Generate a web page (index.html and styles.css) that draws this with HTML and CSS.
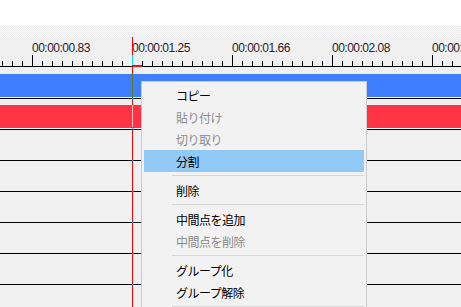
FILE: index.html
```html
<!DOCTYPE html>
<html lang="ja">
<head>
<meta charset="utf-8">
<title>Timeline</title>
<link rel="stylesheet" href="styles.css">
</head>
<body>
<div class="app">
  <div class="topbar"></div>
  <div class="checker"></div>
  <div class="ruler">
    <div class="labels">
      <span class="label">00:00:00.83</span>
      <span class="label">00:00:01.25</span>
      <span class="label">00:00:01.66</span>
      <span class="label">00:00:02.08</span>
      <span class="label">00:00:02.50</span>
    </div>
    <svg class="ticks" width="461" height="31" viewBox="0 0 461 31">
      <g stroke="#000" stroke-width="1" shape-rendering="crispEdges">
        <line x1="0" y1="29.5" x2="461" y2="29.5"/>
        <path id="tk" d=""/>
      </g>
    </svg>
  </div>
  <div class="tracks">
    <div class="row"><div class="clip clip-blue"></div></div>
    <div class="row"><div class="clip clip-red"></div></div>
    <div class="row"></div>
    <div class="row"></div>
    <div class="row"></div>
    <div class="row"></div>
    <div class="row"></div>
    <div class="row"></div>
  </div>

  <div class="playhead"></div>
  <div class="playhead-mark"></div>

  <div class="menu">
    <div class="item">コピー</div>
    <div class="item disabled">貼り付け</div>
    <div class="item disabled">切り取り</div>
    <div class="item active">分割</div>
    <div class="sep"></div>
    <div class="item">削除</div>
    <div class="sep"></div>
    <div class="item">中間点を追加</div>
    <div class="item disabled">中間点を削除</div>
    <div class="sep"></div>
    <div class="item">グループ化</div>
    <div class="item">グループ解除</div>
    <div class="sep"></div>
  </div>
</div>
<script>
(function(){
  var d = "";
  for (var x = 2; x < 461; x += 10) {
    var top = ((x - 32) % 100 === 0) ? 18 : 24;
    d += "M" + (x + 0.5) + " " + top + "V29 ";
  }
  document.getElementById("tk").setAttribute("d", d);
})();
</script>
</body>
</html>
```

FILE: styles.css
```css
html, body {
  margin: 0;
  padding: 0;
}
body {
  width: 461px;
  height: 307px;
  overflow: hidden;
  background: #f0f0f0;
}
.app {
  position: relative;
  width: 461px;
  height: 307px;
  overflow: hidden;
  background: #f0f0f0;
}
.topbar {
  height: 25px;
  background: #ffffff;
}
.checker {
  height: 12px;
  background: repeating-conic-gradient(#ececec 0 25%, #f9f9f9 0 50%) 0 0 / 2px 2px;
}
.ruler {
  position: relative;
  height: 31px;
  background: #f0f0f0;
}
.labels {
  display: flex;
  padding-left: 32px;
  padding-top: 4px;
  font-family: "Liberation Sans", Arial, sans-serif;
  font-size: 12px;
  letter-spacing: -0.5px;
  line-height: 14px;
  color: #1f2430;
  white-space: nowrap;
}
.label {
  flex: 0 0 100px;
}
.ticks {
  position: absolute;
  left: 0;
  top: 0;
}
.tracks {
  display: flex;
  flex-direction: column;
}
.row {
  flex: 0 0 auto;
  height: 24px;
  padding-top: 6px;
  box-sizing: content-box;
  border-bottom: 1px solid #000;
}
.clip {
  height: 23px;
  border-bottom: 1px solid #fff;
}
.clip-blue { background: #3f7fff; }
.clip-red { background: #ff3344; }

.playhead {
  position: absolute;
  left: 132px;
  top: 37px;
  width: 1px;
  height: 270px;
  background: linear-gradient(to bottom,
    #ff0000 0 18px,
    #00e0ff 18px 28px,
    #ff0000 28px 37px,
    #5f7a1a 37px 60px,
    #ff0000 60px 61px,
    #00e0ff 61px 62px,
    #ff0000 62px 68px,
    #ffc0c8 68px 90px,
    #ff0000 90px 91px,
    #00e0ff 91px 92px,
    #ff0000 92px 123px,
    #00e0ff 123px 124px,
    #ff0000 124px 154px,
    #00e0ff 154px 155px,
    #ff0000 155px 185px,
    #00e0ff 185px 186px,
    #ff0000 186px 216px,
    #00e0ff 216px 217px,
    #ff0000 217px 247px,
    #00e0ff 247px 248px,
    #ff0000 248px 270px);
}
.playhead-mark {
  position: absolute;
  left: 133px;
  top: 65px;
  width: 9px;
  height: 2px;
  background: #ee1111;
}

.menu {
  position: absolute;
  left: 141px;
  top: 81px;
  width: 224px;
  padding: 2px 0 4px;
  background: #f2f2f2;
  border: 1px solid #cccccc;
  font-family: "Noto Sans CJK JP", "Noto Sans", sans-serif;
  font-size: 12px;
  letter-spacing: -0.5px;
  color: #000;
}
.item {
  height: 22px;
  margin: 0 2px;
  padding-left: 32px;
  display: flex;
  align-items: center;
  white-space: nowrap;
}
.item.disabled {
  color: #8c8c8c;
}
.item.active {
  background: #91c9f7;
}
.sep {
  height: 7px;
  box-sizing: border-box;
  margin: 0 2px;
  padding: 3px 0 0 28px;
}
.sep::after {
  content: "";
  display: block;
  height: 1px;
  background: #d7d7d7;
}
```
